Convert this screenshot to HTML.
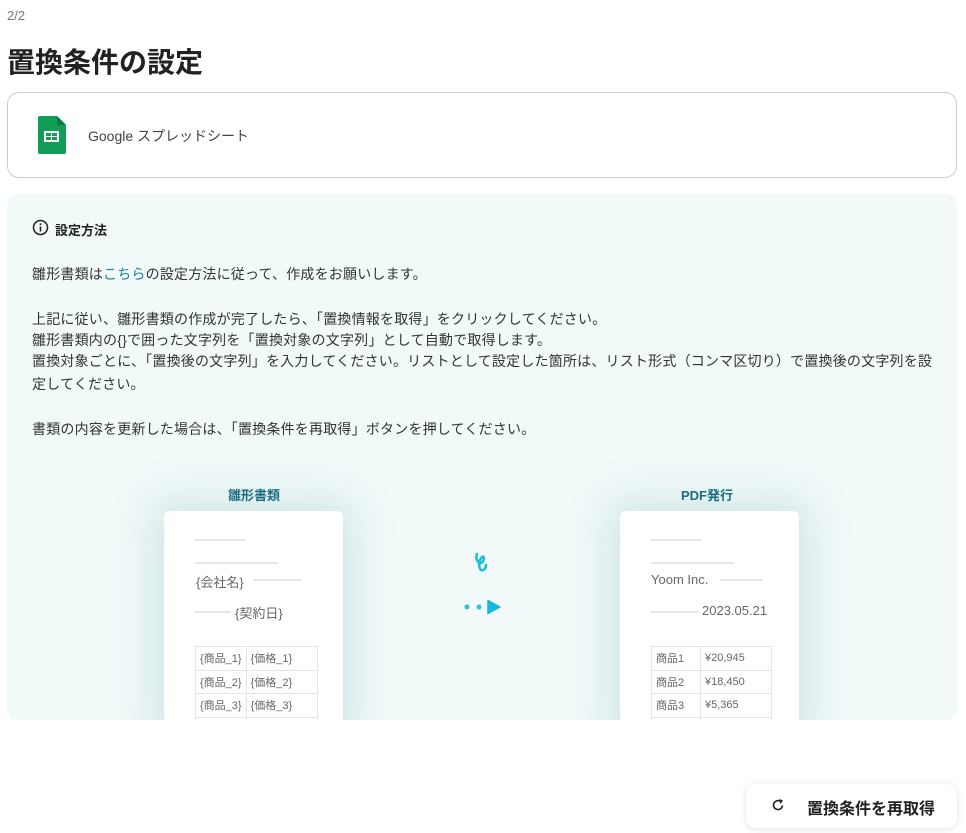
<!DOCTYPE html><html><head><meta charset="utf-8"><style>
*{margin:0;padding:0;box-sizing:border-box}
body{width:966px;height:833px;background:#fff;font-family:"Liberation Sans","Noto Sans CJK JP",sans-serif;color:#333;position:relative;overflow:hidden}
.abs{position:absolute}
.t{font-size:14px;letter-spacing:0.2px;color:#333;left:32px;white-space:nowrap}
.ln{position:absolute;height:2px;background:#e6e6e6}
.doc{position:absolute;top:511px;width:179px;height:230px;background:#fff;border-radius:6px;box-shadow:0 0 40px 10px rgba(150,195,200,.35)}
table{position:absolute;border-collapse:collapse;font-size:11px;color:#666}
td{border:1px solid #e4e4e4;height:23.5px;padding:0 4px;white-space:nowrap}
</style></head><body>
<div class="abs" style="left:7px;top:8px;font-size:13px;color:#777">2/2</div>
<div class="abs" style="left:7px;top:41px;font-size:28px;font-weight:bold;color:#222">置換条件の設定</div>
<div class="abs" style="left:7px;top:92px;width:950px;height:86px;border:1px solid #ccc;border-radius:12px"></div>
<svg class="abs" style="left:38px;top:116px" width="28" height="38" viewBox="0 0 28 38"><path d="M2 0H19L28 9V36a2 2 0 0 1-2 2H2a2 2 0 0 1-2-2V2a2 2 0 0 1 2-2z" fill="#0f9d58"/><path d="M19 0L28 9H21a2 2 0 0 1-2-2z" fill="#087a42"/><rect x="6" y="15" width="15" height="11" fill="#fff"/><rect x="8" y="17" width="5" height="3" fill="#0f9d58"/><rect x="14" y="17" width="5" height="3" fill="#0f9d58"/><rect x="8" y="21" width="5" height="3" fill="#0f9d58"/><rect x="14" y="21" width="5" height="3" fill="#0f9d58"/></svg>
<div class="abs" style="left:88px;top:126px;font-size:14px;color:#444">Google スプレッドシート</div>
<div class="abs" style="left:7px;top:194px;width:950px;height:526px;background:#f1f9f9;border-radius:12px"></div>
<div class="abs" style="left:0;top:0;width:966px;height:720px;overflow:hidden">
<div class="doc" style="left:164px"></div><div class="doc" style="left:620px"></div>
<div class="ln" style="left:195px;top:539px;width:50px"></div>
<div class="ln" style="left:195px;top:562px;width:83px"></div>
<div class="abs" style="left:196px;top:572px;font-size:13px;color:#666">{会社名}</div>
<div class="ln" style="left:253px;top:579px;width:48px"></div>
<div class="ln" style="left:195px;top:611px;width:36px"></div>
<div class="abs" style="left:235px;top:603px;font-size:13px;color:#666">{契約日}</div>
<table style="left:195px;top:646px"><tr><td style="width:49px">{商品_1}</td><td style="width:71px">{価格_1}</td></tr><tr><td>{商品_2}</td><td>{価格_2}</td></tr><tr><td>{商品_3}</td><td>{価格_3}</td></tr><tr><td></td><td></td></tr></table>
<div class="ln" style="left:651px;top:539px;width:50px"></div>
<div class="ln" style="left:651px;top:562px;width:83px"></div>
<div class="abs" style="left:651px;top:572px;font-size:13px;color:#666">Yoom Inc.</div>
<div class="ln" style="left:720px;top:579px;width:43px"></div>
<div class="ln" style="left:651px;top:611px;width:47px"></div>
<div class="abs" style="left:702px;top:603px;font-size:13px;color:#666">2023.05.21</div>
<table style="left:651px;top:646px"><tr><td style="width:49px">商品1</td><td style="width:71px">¥20,945</td></tr><tr><td>商品2</td><td>¥18,450</td></tr><tr><td>商品3</td><td>¥5,365</td></tr><tr><td></td><td></td></tr></table>
</div>
<svg class="abs" style="left:32px;top:219px" width="17" height="17" viewBox="0 0 17 17"><circle cx="8.5" cy="8.5" r="7" fill="none" stroke="#222" stroke-width="1.5"/><rect x="7.7" y="7.5" width="1.6" height="5" fill="#222"/><circle cx="8.5" cy="5.2" r="1" fill="#222"/></svg>
<div class="abs" style="left:55px;top:220px;font-size:13px;font-weight:bold;color:#222">設定方法</div>
<div class="abs t" style="top:264px">雛形書類は<span style="color:#1a7fa0">こちら</span>の設定方法に従って、作成をお願いします。</div>
<div class="abs t" style="top:309px">上記に従い、雛形書類の作成が完了したら、「置換情報を取得」をクリックしてください。</div>
<div class="abs t" style="top:330px">雛形書類内の{}で囲った文字列を「置換対象の文字列」として自動で取得します。</div>
<div class="abs t" style="top:351px">置換対象ごとに、「置換後の文字列」を入力してください。リストとして設定した箇所は、リスト形式（コンマ区切り）で置換後の文字列を設</div>
<div class="abs t" style="top:374px">定してください。</div>
<div class="abs t" style="top:419px">書類の内容を更新した場合は、「置換条件を再取得」ボタンを押してください。</div>
<div class="abs" style="left:228px;top:485px;font-size:13px;font-weight:bold;color:#1a6e80">雛形書類</div>
<div class="abs" style="left:681px;top:485px;font-size:13px;font-weight:bold;color:#1a6e80">PDF発行</div>
<svg class="abs" style="left:472px;top:551px" width="24" height="24" viewBox="0 0 24 24"><path d="M5 3C3 8 6 12 9 12C12 11 13 4 10 6C7 9 6 16 9 19C11 20 14 18 14 14" fill="none" stroke="#1bbfd6" stroke-width="2.5" stroke-linecap="round"/></svg>
<svg class="abs" style="left:462px;top:599px" width="40" height="16"><circle cx="5" cy="8" r="2.5" fill="#2bc4d0"/><circle cx="17" cy="8" r="2.5" fill="#2bc4d0"/><path d="M26 1.5L38 8L26 14.5Z" fill="#16b8e0" stroke="#16b8e0" stroke-linejoin="round" stroke-width="1.5"/></svg>
<div class="abs" style="left:746px;top:784px;width:211px;height:44px;background:#fff;border-radius:10px;box-shadow:0 1px 8px rgba(0,0,0,.12)"></div>
<svg class="abs" style="left:771px;top:798px" width="14" height="14" viewBox="0 0 14 14"><path d="M11.5 7.5A4.5 4.5 0 1 1 9.5 3.3" fill="none" stroke="#222" stroke-width="1.6"/><path d="M8 1L12 2.5L9.5 6Z" fill="#222"/></svg>
<div class="abs" style="left:807px;top:795px;font-size:16px;font-weight:bold;color:#222">置換条件を再取得</div>
</body></html>
